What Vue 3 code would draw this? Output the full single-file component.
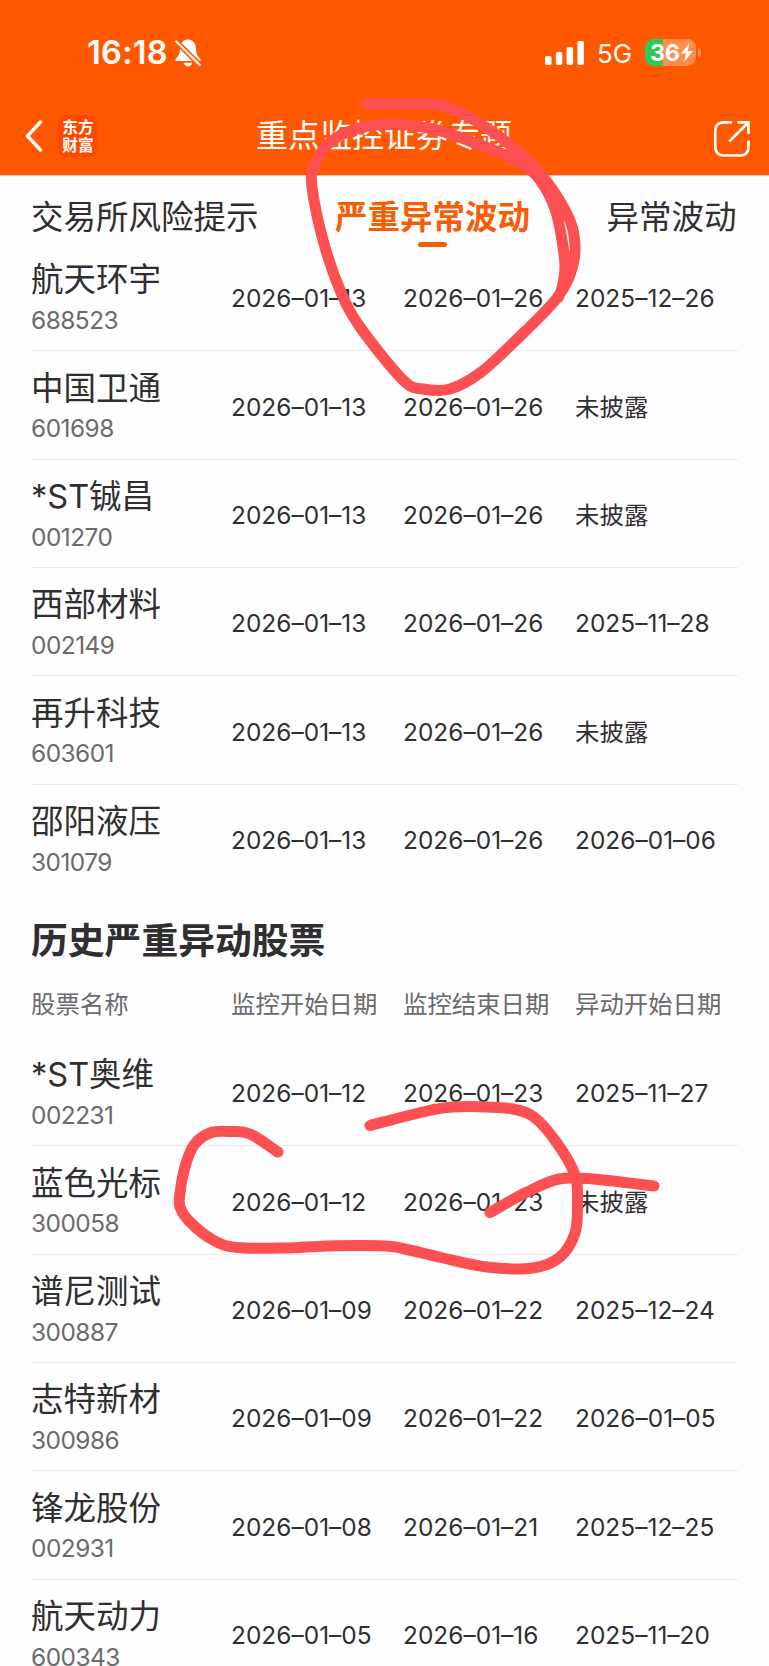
<script setup>
import { ref } from 'vue';

const tabs = ref(['交易所风险提示', '严重异常波动', '异常波动']);
const active = ref(1);

const columns = ['股票名称', '监控开始日期', '监控结束日期', '异动开始日期'];

// 正在监控的股票
const current = ref([
  { name: '航天环宇', code: '688523', start: '2026–01–13', end: '2026–01–26', move: '2025–12–26' },
  { name: '中国卫通', code: '601698', start: '2026–01–13', end: '2026–01–26', move: '未披露' },
  { name: '*ST铖昌', code: '001270', start: '2026–01–13', end: '2026–01–26', move: '未披露' },
  { name: '西部材料', code: '002149', start: '2026–01–13', end: '2026–01–26', move: '2025–11–28' },
  { name: '再升科技', code: '603601', start: '2026–01–13', end: '2026–01–26', move: '未披露' },
  { name: '邵阳液压', code: '301079', start: '2026–01–13', end: '2026–01–26', move: '2026–01–06' },
]);

// 历史记录
const history = ref([
  { name: '*ST奥维', code: '002231', start: '2026–01–12', end: '2026–01–23', move: '2025–11–27' },
  { name: '蓝色光标', code: '300058', start: '2026–01–12', end: '2026–01–23', move: '未披露' },
  { name: '谱尼测试', code: '300887', start: '2026–01–09', end: '2026–01–22', move: '2025–12–24' },
  { name: '志特新材', code: '300986', start: '2026–01–09', end: '2026–01–22', move: '2026–01–05' },
  { name: '锋龙股份', code: '002931', start: '2026–01–08', end: '2026–01–21', move: '2025–12–25' },
  { name: '航天动力', code: '600343', start: '2026–01–05', end: '2026–01–16', move: '2025–11–20' },
]);

// 手绘标记的轨迹点
const strokes = [
  [[363, 104], [400, 103.5], [433, 104.5], [455, 110], [487, 128], [515, 149], [543, 177], [565, 210], [574, 235], [573, 265], [557, 298], [513, 343], [480, 373], [450, 389], [423, 389], [403, 380], [360, 327], [340, 290], [323, 240], [312, 187], [314, 167], [327, 145], [353, 130], [390, 124], [433, 129], [467, 140], [507, 156], [533, 172], [547, 191], [556, 212], [562, 240], [565, 267], [562, 288], [557, 300]],
  [[278, 1152], [250, 1134], [230, 1131.5], [210, 1133], [194, 1145], [185, 1167], [180, 1193], [180, 1207], [190, 1222], [213, 1240], [237, 1247.5], [287, 1248], [327, 1246], [385, 1246], [405, 1249], [443, 1258], [487, 1267], [533, 1268], [560, 1257], [575, 1233], [577.5, 1203], [575, 1175], [557, 1143], [534, 1117], [513, 1109], [487, 1107], [453, 1107], [427, 1111], [370, 1125.5]],
  [[490, 1212.5], [527, 1192], [559, 1179], [593, 1179], [654, 1186]],
];

// 轨迹点转成平滑曲线
const toPath = (pts) => {
  let d = `M${pts[0][0]} ${pts[0][1]}`;
  for (let i = 0; i < pts.length - 1; i++) {
    const a = pts[i - 1] || pts[i];
    const b = pts[i];
    const c = pts[i + 1];
    const e = pts[i + 2] || c;
    d += ` C${b[0] + (c[0] - a[0]) / 6} ${b[1] + (c[1] - a[1]) / 6} ${c[0] - (e[0] - b[0]) / 6} ${c[1] - (e[1] - b[1]) / 6} ${c[0]} ${c[1]}`;
  }
  return d;
};
</script>

<template>
  <div class="page">
    <header class="header">
      <div class="status">
        <span class="time">16:18</span>
        <svg class="bell" width="26" height="28" viewBox="0 0 26 28">
          <path d="M13 0.500C8 0.500 5 4.500 5 9.500C5 15 3 17.500 0.800 19.800Q-0.500 22 2 22H24Q26.500 22 25.200 19.800C23 17.500 21 15 21 9.500C21 4.500 18 0.500 13 0.500Z" fill="#fff" />
          <path d="M8.500 23.800H17.500Q16 27.400 13 27.400Q10 27.400 8.500 23.800Z" fill="#fff" />
          <path d="M0 1.200L26 27.200" stroke="#ff5a00" stroke-width="5.400" />
          <path d="M1.200 2.400L24.800 26" stroke="#fff" stroke-width="2.100" stroke-linecap="round" />
        </svg>
        <svg class="signal" width="40" height="26" viewBox="0 0 40 26" fill="#fff">
          <rect x="0" y="16" width="6.500" height="9" rx="1.800" />
          <rect x="10.800" y="12" width="6.500" height="13" rx="1.800" />
          <rect x="21.600" y="7" width="6.500" height="18" rx="1.800" />
          <rect x="32.400" y="1" width="6.500" height="24" rx="1.800" />
        </svg>
        <span class="net">5G</span>
        <div class="battery">
          <span>36</span>
          <svg width="12" height="19" viewBox="0 0 12 19"><path d="M8.500 0L0 10.500H5L3.200 19L12 8H6.800Z" fill="#fff" /></svg>
        </div>
        <i class="nub"></i>
      </div>
      <div class="nav">
        <svg class="back" width="18" height="34" viewBox="0 0 18 34">
          <path d="M15.500 3L2.500 17L15.500 31" fill="none" stroke="#fff" stroke-width="3.400" stroke-linecap="round" stroke-linejoin="round" />
        </svg>
        <div class="logo">东方<br>财富</div>
        <h1 class="title">重点监控证券专题</h1>
        <svg class="share" width="38" height="38" viewBox="0 0 38 38" fill="none" stroke="#fff" stroke-width="2.700" stroke-linecap="round" stroke-linejoin="round">
          <path d="M18 2.300H11Q2.300 2.300 2.300 11V27Q2.300 35.500 11 35.500H27Q35.500 35.500 35.500 27V21.500" />
          <path d="M25.500 2.300H35.500V13M35 2.800L17 20.800" />
        </svg>
      </div>
    </header>

    <nav class="tabs">
      <span v-for="(tab, i) in tabs" :key="tab" class="tab" :class="{ active: i === active }" @click="active = i">{{ tab }}</span>
    </nav>

    <section class="list">
      <div v-for="item in current" :key="item.code" class="row">
        <div class="stock">
          <div class="name">{{ item.name }}</div>
          <div class="code">{{ item.code }}</div>
        </div>
        <span class="date">{{ item.start }}</span>
        <span class="date">{{ item.end }}</span>
        <span class="date">{{ item.move }}</span>
      </div>
    </section>

    <h2 class="heading">历史严重异动股票</h2>
    <div class="columns">
      <span v-for="col in columns" :key="col">{{ col }}</span>
    </div>
    <section class="list">
      <div v-for="item in history" :key="item.code" class="row">
        <div class="stock">
          <div class="name">{{ item.name }}</div>
          <div class="code">{{ item.code }}</div>
        </div>
        <span class="date">{{ item.start }}</span>
        <span class="date">{{ item.end }}</span>
        <span class="date">{{ item.move }}</span>
      </div>
    </section>

    <svg class="marks" width="769" height="1666" viewBox="0 0 769 1666">
      <path v-for="(pts, i) in strokes" :key="i" :d="toPath(pts)" :class="{ flat: i === 0 }" />
    </svg>
  </div>
</template>

<style>
body {
  background: #fefefe;
}
</style>

<style scoped>
.page {
  position: relative;
  width: 769px;
  height: 1666px;
  overflow: hidden;
  color: #2f2f31;
  font-family: Inter, "Noto Sans CJK SC", sans-serif;
  background: #fefefe;
}

.header {
  height: 175px;
  color: #fff;
  background: #ff5800;
}

.status {
  display: flex;
  align-items: center;
  height: 105px;
  padding-left: 87px;
}

.time {
  width: 88px;
  font-size: 32.5px;
  font-weight: 600;
  letter-spacing: 0.3px;
}

.signal {
  margin-left: 344px;
}

.net {
  width: 47px;
  margin-left: 12px;
  padding-top: 2px;
  font-size: 26px;
}

.battery {
  display: flex;
  align-items: center;
  box-sizing: border-box;
  width: 51px;
  height: 27px;
  margin-left: 1px;
  padding-left: 5px;
  border-radius: 8.5px;
  background: linear-gradient(90deg, #34c759 0 18.5px, #ff8c4d 18.5px);
}

.battery span {
  width: 31px;
  font-size: 23.5px;
  font-weight: 700;
  letter-spacing: -0.5px;
}

.nub {
  width: 2.5px;
  height: 9px;
  margin-left: 2px;
  border-radius: 0 3px 3px 0;
  background: #ff8c4d;
}

.nav {
  display: flex;
  align-items: center;
  height: 62px;
  padding-left: 25px;
}

.logo {
  width: 40px;
  height: 34px;
  margin-left: 15px;
  padding: 4px 0;
  border-radius: 8px;
  background: #ff4800;
  font-size: 15.7px;
  font-weight: 700;
  line-height: 17.5px;
  text-align: center;
}

.title {
  width: 457px;
  margin: 0 0 0 158px;
  font-size: 32px;
  font-weight: 400;
  line-height: 40px;
  white-space: nowrap;
}

.share {
  margin-top: 5px;
}

.tabs {
  display: flex;
  justify-content: space-between;
  box-sizing: border-box;
  height: 67.8px;
  padding: 19px 32.5px 0 31px;
  border-top: 1px solid #ffc4a6;
  font-size: 32.5px;
  line-height: 46px;
}

.tab.active {
  color: #fa5c05;
  font-weight: 700;
}

.tab.active::after {
  content: "";
  display: block;
  width: 29px;
  height: 4.5px;
  margin: 1px auto 0;
  border-radius: 3px;
  background: #fa5c05;
}

.row,
.columns {
  display: grid;
  grid-template-columns: 200px 172px 172px 1fr;
  box-sizing: border-box;
  margin: 0 31px;
}

.row {
  height: 108.4px;
  border-bottom: 1px solid #ececec;
}

.list .row:last-child {
  border-bottom: none;
}

.name {
  margin-top: 15.5px;
  font-size: 32.5px;
  line-height: 44px;
}

.code {
  margin-top: 1.500px;
  color: #6b6b6d;
  font-size: 24.4px;
  line-height: 32px;
  letter-spacing: -0.5px;
}

.date {
  padding-top: 37.5px;
  font-size: 24.4px;
  line-height: 36px;
  letter-spacing: 0.05px;
  white-space: nowrap;
}

.heading {
  height: 66.4px;
  margin: 0;
  padding: 13.6px 31px 0;
  font-size: 36.8px;
  font-weight: 700;
  line-height: 67.4px;
}

.columns {
  height: 64.6px;
  color: #6b6b6d;
  font-size: 24.4px;
  line-height: 63.6px;
  white-space: nowrap;
}

.marks {
  position: absolute;
  top: 0;
  left: 0;
  pointer-events: none;
}

.marks path {
  fill: none;
  stroke: #fc5052;
  stroke-width: 11;
  stroke-linecap: round;
  stroke-linejoin: round;
}

.marks .flat {
  stroke-linecap: butt;
}
</style>
